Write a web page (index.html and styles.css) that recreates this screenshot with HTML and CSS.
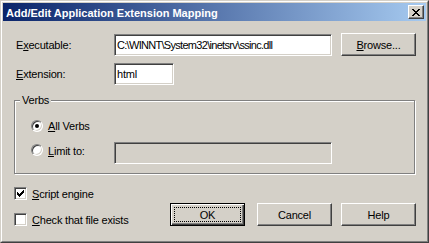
FILE: index.html
```html
<!DOCTYPE html>
<html lang="en">
<head>
    <meta charset="UTF-8">
    <title>Add/Edit Application Extension Mapping</title>
    <link rel="stylesheet" href="styles.css">
</head>
<body>
    <div class="window">
        <div class="frame">
            <div class="titlebar">
                <span class="title">Add/Edit Application Extension Mapping</span>
                <button class="close">
                    <svg width="8" height="7" viewBox="0 0 8 7" shape-rendering="crispEdges">
                        <path d="M0 0h2v1h-2zM6 0h2v1h-2zM1 1h2v1h-2zM5 1h2v1h-2zM2 2h4v1h-4zM3 3h2v1h-2zM2 4h4v1h-4zM1 5h2v1h-2zM5 5h2v1h-2zM0 6h2v1h-2zM6 6h2v1h-2z" fill="#000"/>
                    </svg>
                </button>
            </div>

            <div class="content">
                <div class="row rowExe">
                    <label class="fieldLabel">E<u>x</u>ecutable:</label>
                    <div class="textbox exeBox">C:\WINNT\System32\inetsrv\ssinc.dll</div>
                    <button class="btn browse"><u>B</u>rowse...</button>
                </div>

                <div class="row rowExt">
                    <label class="fieldLabel"><u>E</u>xtension:</label>
                    <div class="textbox extBox">html</div>
                </div>

                <div class="group">
                    <span class="legend">Verbs</span>
                    <div class="radioRow">
                        <span class="radio checked"></span>
                        <span class="radioText"><u>A</u>ll Verbs</span>
                    </div>
                    <div class="radioRow limitRow">
                        <span class="radio"></span>
                        <span class="radioText"><u>L</u>imit to:</span>
                        <div class="textbox limitBox"></div>
                    </div>
                </div>

                <div class="bottom">
                    <div class="checks">
                        <div class="checkRow">
                            <span class="checkbox">
                                <svg width="7" height="7" viewBox="0 0 7 7" shape-rendering="crispEdges">
                                    <path d="M6 0h1v3h-1zM5 1h1v3h-1zM4 2h1v3h-1zM3 3h1v3h-1zM2 4h1v3h-1zM1 3h1v3h-1zM0 2h1v3h-1z" fill="#000"/>
                                </svg>
                            </span>
                            <span><u>S</u>cript engine</span>
                        </div>
                        <div class="checkRow">
                            <span class="checkbox"></span>
                            <span><u>C</u>heck that file exists</span>
                        </div>
                    </div>
                    <div class="buttons">
                        <button class="btn default">OK</button>
                        <button class="btn cancel">Cancel</button>
                        <button class="btn help">Help</button>
                    </div>
                </div>
            </div>
        </div>
    </div>
</body>
</html>
```

FILE: styles.css
```css
* {
    box-sizing: border-box;
}
body {
    margin: 0;
    background-color: #d4d0c8;
    font-family: "Liberation Sans", Arial, sans-serif;
    font-size: 11px;
    letter-spacing: -0.2px;
    color: #000;
}
u {
    text-decoration: underline;
    text-underline-offset: 1px;
}

/* window frame */
.window {
    width: 429px;
    height: 243px;
    border: 1px solid;
    border-color: #d4d0c8 #404040 #404040 #d4d0c8;
}
.frame {
    height: 100%;
    border: 1px solid;
    border-color: #fff #808080 #808080 #fff;
    padding: 1px;
    background-color: #d4d0c8;
}
.titlebar {
    height: 18px;
    display: flex;
    align-items: center;
    padding-left: 3px;
    padding-right: 2px;
    background: linear-gradient(to right, #0a246a, #a6caf0);
}
.title {
    flex: 1;
    color: #fff;
    font-weight: bold;
    font-size: 11px;
    letter-spacing: 0;
    line-height: 18px;
    padding-top: 1px;
}
.close {
    width: 16px;
    height: 14px;
    padding: 0;
    display: flex;
    align-items: center;
    justify-content: center;
    background-color: #d4d0c8;
    border: 1px solid;
    border-color: #fff #404040 #404040 #fff;
    box-shadow: inset -1px -1px 0 #808080;
}

/* form area */
.content {
    padding: 0 10px 0 11px;
}
.row {
    display: flex;
    align-items: center;
}
.rowExe {
    margin-top: 12px;
    height: 23px;
}
.rowExt {
    margin-top: 7px;
    height: 22px;
}
.fieldLabel {
    width: 100px;
    padding-left: 2px;
}
.textbox {
    height: 22px;
    line-height: 20px;
    padding-left: 2px;
    background-color: #fff;
    border: 1px solid;
    border-color: #808080 #fff #fff #808080;
    box-shadow: inset 1px 1px 0 #404040, inset -1px -1px 0 #d4d0c8;
    white-space: nowrap;
    overflow: hidden;
}
.exeBox {
    width: 218px;
    letter-spacing: -0.7px;
}
.extBox {
    width: 60px;
}

.btn {
    height: 23px;
    width: 75px;
    padding: 0;
    font-family: "Liberation Sans", Arial, sans-serif;
    font-size: 11px;
    letter-spacing: -0.2px;
    color: #000;
    background-color: #d4d0c8;
    border: 1px solid;
    border-color: #fff #404040 #404040 #fff;
    box-shadow: inset -1px -1px 0 #808080;
}
.browse {
    margin-left: 9px;
}

/* verbs group */
.group {
    position: relative;
    margin-top: 15px;
    width: 401px;
    height: 74px;
    padding: 17px 0 0 16px;
    border: 1px solid #808080;
    box-shadow: inset 1px 1px 0 #fff, 1px 1px 0 #fff;
}
.legend {
    position: absolute;
    top: -8px;
    left: 5px;
    padding: 0 2px;
    line-height: 14px;
    background-color: #d4d0c8;
}
.radioRow {
    display: flex;
    align-items: center;
    height: 16px;
}
.limitRow {
    margin-top: 8px;
    height: 22px;
    align-items: flex-start;
}
.radio {
    width: 12px;
    height: 12px;
    border-radius: 50%;
    border: 1px solid;
    border-color: #808080 #fff #fff #808080;
    background-color: #fff;
    box-shadow: inset 1px 1px 0 #404040, inset -1px -1px 0 #d4d0c8;
    display: flex;
    align-items: center;
    justify-content: center;
}
.limitRow .radio {
    margin-top: 2px;
}
.radio.checked::after {
    content: "";
    width: 4px;
    height: 4px;
    border-radius: 50%;
    background-color: #000;
}
.radioText {
    margin-left: 5px;
    width: 66px;
}
.limitRow .radioText {
    line-height: 16px;
    margin-top: 1px;
}
.limitBox {
    width: 218px;
    background-color: #d4d0c8;
}

/* bottom area */
.bottom {
    display: flex;
    margin-top: 11px;
}
.checks {
    width: 156px;
}
.checkRow {
    display: flex;
    align-items: center;
    height: 17px;
}
.checkRow + .checkRow {
    margin-top: 9px;
}
.checkbox {
    width: 13px;
    height: 13px;
    margin-right: 5px;
    background-color: #fff;
    border: 1px solid;
    border-color: #808080 #fff #fff #808080;
    box-shadow: inset 1px 1px 0 #404040, inset -1px -1px 0 #d4d0c8;
    display: flex;
    align-items: center;
    justify-content: center;
}
.buttons {
    display: flex;
    margin-top: 18px;
}
.default {
    position: relative;
    border-color: #000;
    box-shadow: inset 1px 1px 0 #fff, inset -1px -1px 0 #404040, inset -2px -2px 0 #808080;
}
.default::after {
    content: "";
    position: absolute;
    top: 3px;
    left: 3px;
    right: 3px;
    bottom: 3px;
    border: 1px dotted #000;
}
.cancel {
    margin-left: 12px;
}
.help {
    margin-left: 9px;
}
```
